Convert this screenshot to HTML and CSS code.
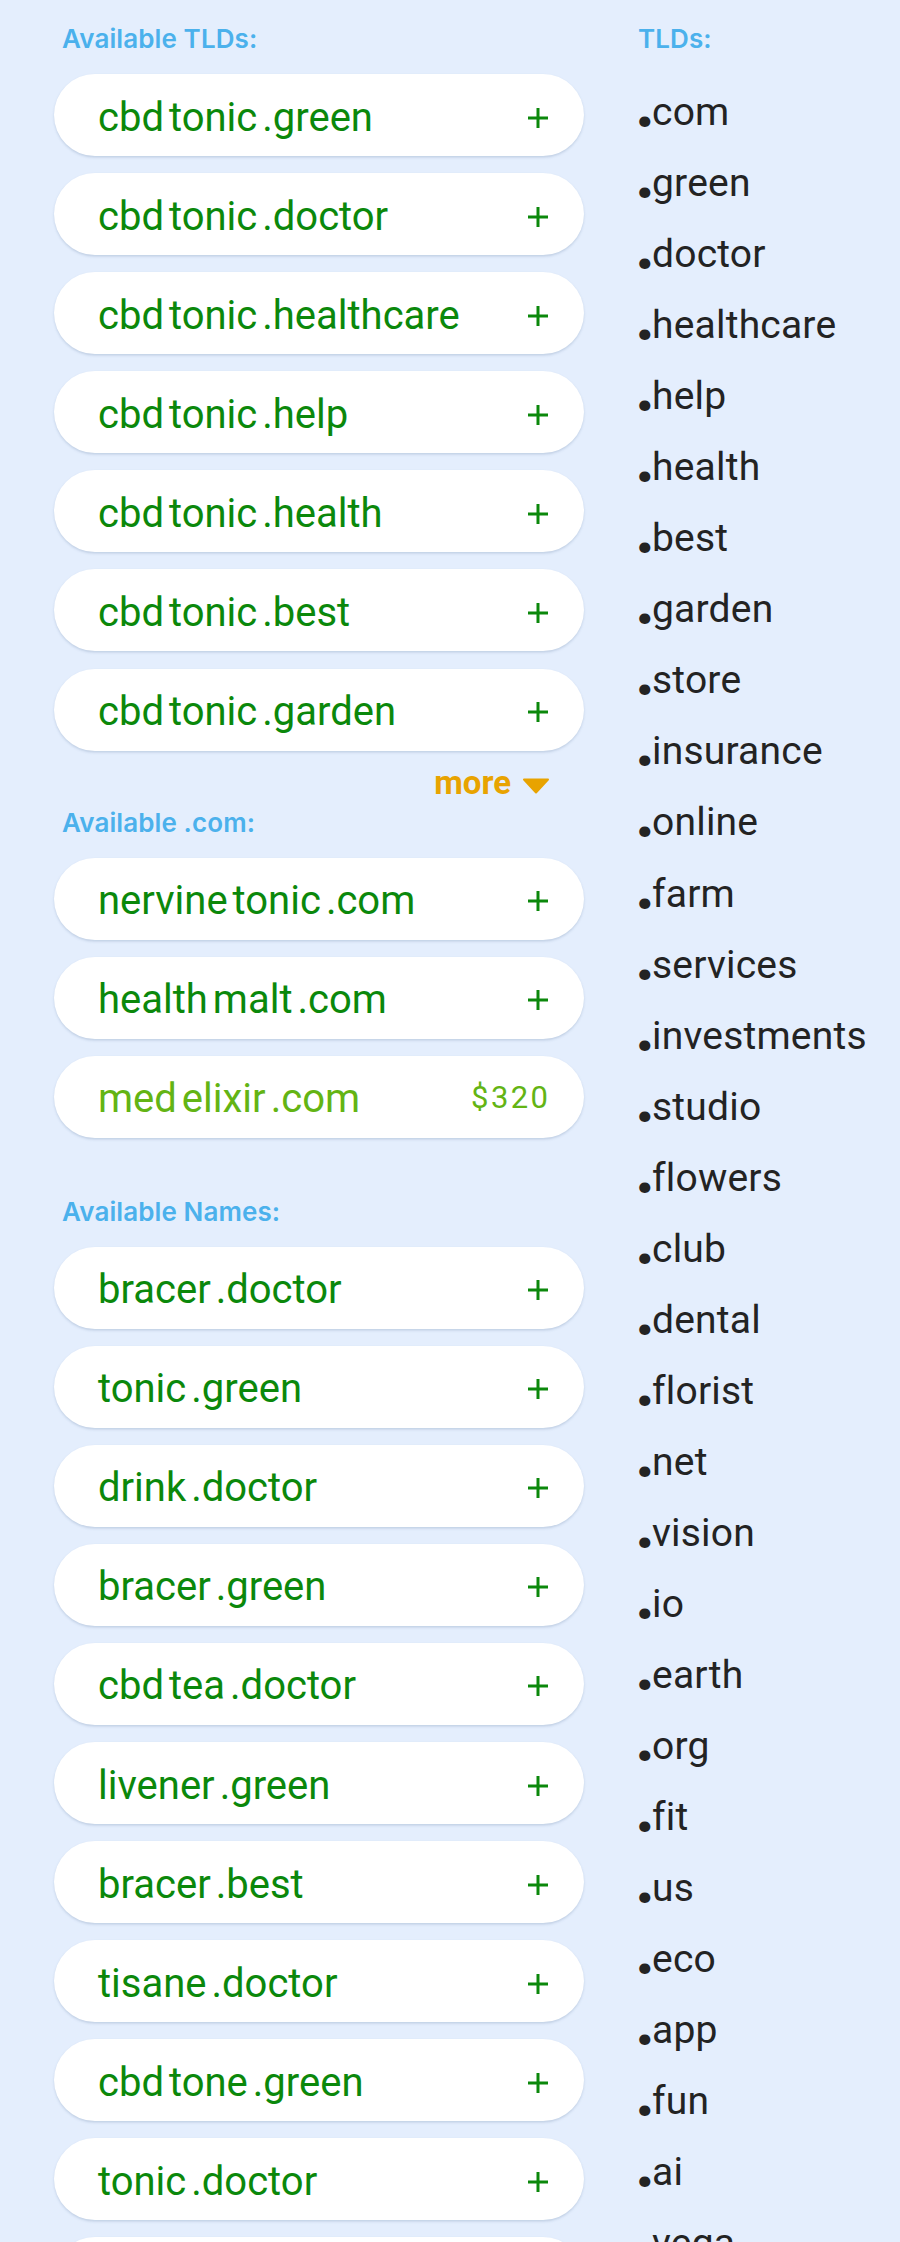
FILE: index.html
```html
<!DOCTYPE html>
<html lang="en">
<head>
<meta charset="utf-8">
<title>Domain suggestions</title>
<link rel="stylesheet" href="styles.css">
</head>
<body>
<div class="page">
  <main class="main">
    <section class="group">
      <h2 class="label">Available TLDs:</h2>
      <ul class="cards">
        <li class="card"><span class="name"><span class="seg">cbd</span><span class="seg">tonic</span><span class="seg">.green</span></span><svg class="plus" viewBox="0 0 20 20"><path d="M10 0v20M0 10h20"/></svg></li>
        <li class="card"><span class="name"><span class="seg">cbd</span><span class="seg">tonic</span><span class="seg">.doctor</span></span><svg class="plus" viewBox="0 0 20 20"><path d="M10 0v20M0 10h20"/></svg></li>
        <li class="card"><span class="name"><span class="seg">cbd</span><span class="seg">tonic</span><span class="seg">.healthcare</span></span><svg class="plus" viewBox="0 0 20 20"><path d="M10 0v20M0 10h20"/></svg></li>
        <li class="card"><span class="name"><span class="seg">cbd</span><span class="seg">tonic</span><span class="seg">.help</span></span><svg class="plus" viewBox="0 0 20 20"><path d="M10 0v20M0 10h20"/></svg></li>
        <li class="card"><span class="name"><span class="seg">cbd</span><span class="seg">tonic</span><span class="seg">.health</span></span><svg class="plus" viewBox="0 0 20 20"><path d="M10 0v20M0 10h20"/></svg></li>
        <li class="card"><span class="name"><span class="seg">cbd</span><span class="seg">tonic</span><span class="seg">.best</span></span><svg class="plus" viewBox="0 0 20 20"><path d="M10 0v20M0 10h20"/></svg></li>
        <li class="card"><span class="name"><span class="seg">cbd</span><span class="seg">tonic</span><span class="seg">.garden</span></span><svg class="plus" viewBox="0 0 20 20"><path d="M10 0v20M0 10h20"/></svg></li>
      </ul>
      <div class="more"><span class="more-text">more</span><svg class="caret" viewBox="0 0 28 16"><path d="M2 1.5h24L14 14.5z"/></svg></div>
    </section>

    <section class="group group-com">
      <h2 class="label">Available .com:</h2>
      <ul class="cards">
        <li class="card"><span class="name"><span class="seg">nervine</span><span class="seg">tonic</span><span class="seg">.com</span></span><svg class="plus" viewBox="0 0 20 20"><path d="M10 0v20M0 10h20"/></svg></li>
        <li class="card"><span class="name"><span class="seg">health</span><span class="seg">malt</span><span class="seg">.com</span></span><svg class="plus" viewBox="0 0 20 20"><path d="M10 0v20M0 10h20"/></svg></li>
        <li class="card card-premium"><span class="name"><span class="seg">med</span><span class="seg">elixir</span><span class="seg">.com</span></span><span class="price">$320</span></li>
      </ul>
    </section>

    <section class="group group-names">
      <h2 class="label">Available Names:</h2>
      <ul class="cards">
        <li class="card"><span class="name"><span class="seg">bracer</span><span class="seg">.doctor</span></span><svg class="plus" viewBox="0 0 20 20"><path d="M10 0v20M0 10h20"/></svg></li>
        <li class="card"><span class="name"><span class="seg">tonic</span><span class="seg">.green</span></span><svg class="plus" viewBox="0 0 20 20"><path d="M10 0v20M0 10h20"/></svg></li>
        <li class="card"><span class="name"><span class="seg">drink</span><span class="seg">.doctor</span></span><svg class="plus" viewBox="0 0 20 20"><path d="M10 0v20M0 10h20"/></svg></li>
        <li class="card"><span class="name"><span class="seg">bracer</span><span class="seg">.green</span></span><svg class="plus" viewBox="0 0 20 20"><path d="M10 0v20M0 10h20"/></svg></li>
        <li class="card"><span class="name"><span class="seg">cbd</span><span class="seg">tea</span><span class="seg">.doctor</span></span><svg class="plus" viewBox="0 0 20 20"><path d="M10 0v20M0 10h20"/></svg></li>
        <li class="card"><span class="name"><span class="seg">livener</span><span class="seg">.green</span></span><svg class="plus" viewBox="0 0 20 20"><path d="M10 0v20M0 10h20"/></svg></li>
        <li class="card"><span class="name"><span class="seg">bracer</span><span class="seg">.best</span></span><svg class="plus" viewBox="0 0 20 20"><path d="M10 0v20M0 10h20"/></svg></li>
        <li class="card"><span class="name"><span class="seg">tisane</span><span class="seg">.doctor</span></span><svg class="plus" viewBox="0 0 20 20"><path d="M10 0v20M0 10h20"/></svg></li>
        <li class="card"><span class="name"><span class="seg">cbd</span><span class="seg">tone</span><span class="seg">.green</span></span><svg class="plus" viewBox="0 0 20 20"><path d="M10 0v20M0 10h20"/></svg></li>
        <li class="card"><span class="name"><span class="seg">tonic</span><span class="seg">.doctor</span></span><svg class="plus" viewBox="0 0 20 20"><path d="M10 0v20M0 10h20"/></svg></li>
        <li class="card card-cut" aria-hidden="true"></li>
      </ul>
    </section>
  </main>

  <aside class="tlds">
    <h2 class="label label-side">TLDs:</h2>
    <ul class="tld-list">
      <li><span class="dot">.</span>com</li>
      <li><span class="dot">.</span>green</li>
      <li><span class="dot">.</span>doctor</li>
      <li><span class="dot">.</span>healthcare</li>
      <li><span class="dot">.</span>help</li>
      <li><span class="dot">.</span>health</li>
      <li><span class="dot">.</span>best</li>
      <li><span class="dot">.</span>garden</li>
      <li><span class="dot">.</span>store</li>
      <li><span class="dot">.</span>insurance</li>
      <li><span class="dot">.</span>online</li>
      <li><span class="dot">.</span>farm</li>
      <li><span class="dot">.</span>services</li>
      <li><span class="dot">.</span>investments</li>
      <li><span class="dot">.</span>studio</li>
      <li><span class="dot">.</span>flowers</li>
      <li><span class="dot">.</span>club</li>
      <li><span class="dot">.</span>dental</li>
      <li><span class="dot">.</span>florist</li>
      <li><span class="dot">.</span>net</li>
      <li><span class="dot">.</span>vision</li>
      <li><span class="dot">.</span>io</li>
      <li><span class="dot">.</span>earth</li>
      <li><span class="dot">.</span>org</li>
      <li><span class="dot">.</span>fit</li>
      <li><span class="dot">.</span>us</li>
      <li><span class="dot">.</span>eco</li>
      <li><span class="dot">.</span>app</li>
      <li><span class="dot">.</span>fun</li>
      <li><span class="dot">.</span>ai</li>
      <li><span class="dot">.</span>vega</li>
    </ul>
  </aside>
</div>
</body>
</html>
```

FILE: styles.css
```css
* {
  box-sizing: border-box;
}

html, body {
  margin: 0;
  padding: 0;
}

body {
  background: #e4eefd;
  font-family: Roboto, "Liberation Sans", sans-serif;
  overflow: hidden;
}

.page {
  display: flex;
  gap: 54px;
  padding: 26px 0 0 54px;
}

.main {
  width: 530px;
  flex: none;
}

.label {
  margin: 0;
  padding-left: 8px;
  font-family: Inter, "Noto Sans", sans-serif;
  font-weight: 600;
  font-size: 26px;
  line-height: 26px;
  color: #4bb1ec;
  letter-spacing: 0.1px;
}

.group .label {
  margin-bottom: 22px;
}

.group-com {
  margin-top: 10px;
}

.group-names {
  margin-top: 60.8px;
}

.cards {
  list-style: none;
  margin: 0;
  padding: 0;
  display: flex;
  flex-direction: column;
  gap: 17.1px;
}

.card {
  height: 82px;
  flex: none;
  background: #ffffff;
  border-radius: 41px;
  box-shadow: 0 1.5px 2.5px rgba(70, 100, 140, 0.22);
  display: flex;
  align-items: center;
  justify-content: space-between;
  padding: 5px 36px 0 44px;
  color: #0b880b;
}

.name {
  font-size: 40px;
  line-height: 40px;
  white-space: nowrap;
}

.seg + .seg {
  margin-left: 5px;
}

.plus {
  width: 20px;
  height: 20px;
  flex: none;
  fill: none;
  stroke: currentColor;
  stroke-width: 3;
}

.card-premium {
  color: #63b414;
}

.price {
  font-size: 31px;
  line-height: 31px;
  letter-spacing: 2.4px;
  margin-right: -2.4px;
  margin-bottom: 4px;
}

.more {
  margin-top: 15px;
  height: 34px;
  display: flex;
  justify-content: flex-end;
  align-items: baseline;
  padding-right: 34px;
  color: #e8a300;
}

.more-text {
  font-weight: 700;
  font-size: 33px;
  line-height: 34px;
}

.caret {
  width: 28px;
  height: 16px;
  margin-left: 11px;
  fill: #e8a300;
  stroke: #e8a300;
  stroke-width: 2;
  stroke-linejoin: round;
}

.tlds {
  flex: 1;
}

.label-side {
  padding-left: 0;
}

.tld-list {
  list-style: none;
  margin: 25px 0 0;
  padding: 0;
  font-size: 39px;
  line-height: 71.05px;
  color: #232323;
  letter-spacing: 0.2px;
}

.dot {
  font-weight: 900;
  -webkit-text-stroke: 4px #232323;
  margin-left: 1px;
  margin-right: 1px;
}
```
